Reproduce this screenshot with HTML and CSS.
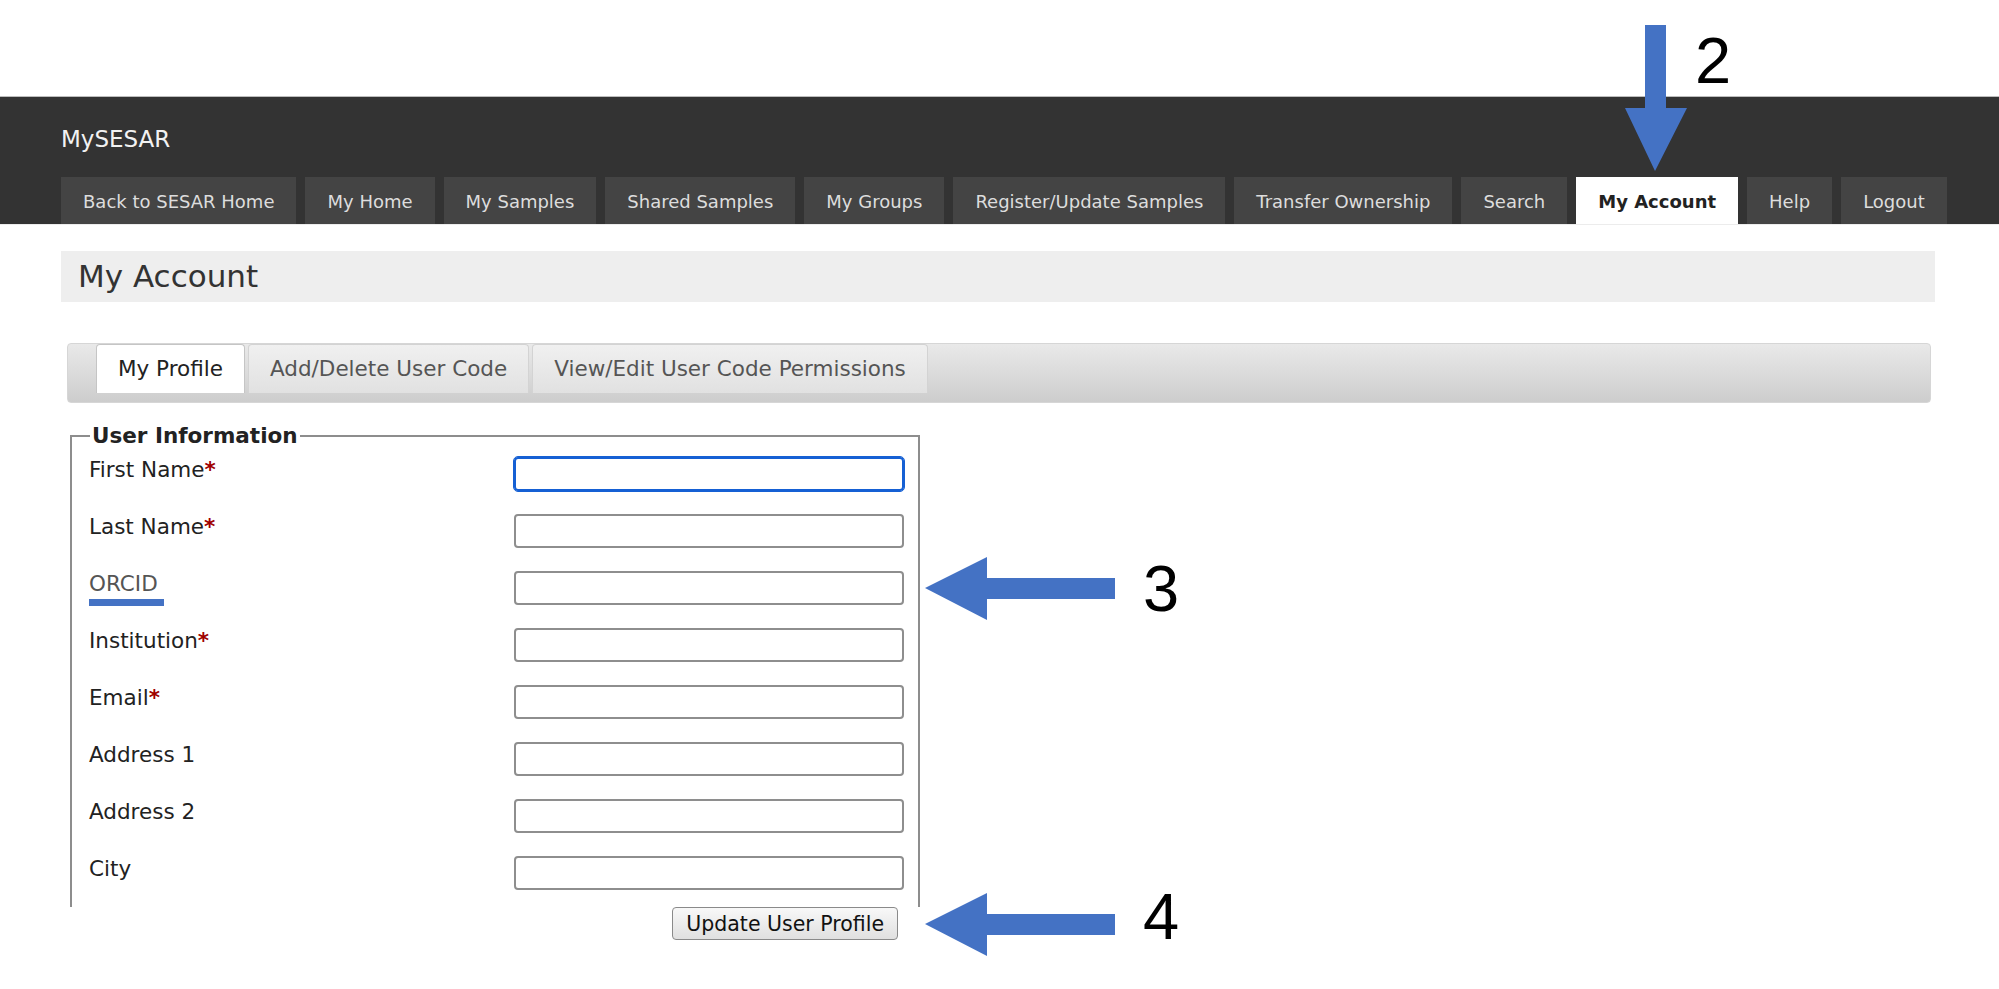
FILE: index.html
```html
<!DOCTYPE html>
<html>
<head>
  <title>MySESAR - My Account</title>
  <link rel="stylesheet" href="styles.css">
</head>
<body>

  <div class="top-space"></div>

  <div class="header">
    <div class="brand">MySESAR</div>
    <ul class="nav">
      <li><a href="#">Back to SESAR Home</a></li>
      <li><a href="#">My Home</a></li>
      <li><a href="#">My Samples</a></li>
      <li><a href="#">Shared Samples</a></li>
      <li><a href="#">My Groups</a></li>
      <li><a href="#">Register/Update Samples</a></li>
      <li><a href="#">Transfer Ownership</a></li>
      <li><a href="#">Search</a></li>
      <li class="active"><a href="#">My Account</a></li>
      <li><a href="#">Help</a></li>
      <li><a href="#">Logout</a></li>
    </ul>
  </div>

  <div class="content">
    <h1 class="page-title">My Account</h1>

    <div class="tabs">
      <ul class="tab-nav">
        <li class="active">My Profile</li>
        <li>Add/Delete User Code</li>
        <li>View/Edit User Code Permissions</li>
      </ul>
    </div>

    <form onsubmit="return false">
      <div class="profile-clip">
        <fieldset class="profile">
          <legend>User Information</legend>
          <div class="fields">
            <label for="firstName">First Name<span class="req">*</span></label>
            <input type="text" id="firstName" class="focused">

            <label for="lastName">Last Name<span class="req">*</span></label>
            <input type="text" id="lastName">

            <label for="orcid" class="orcid">ORCID<span class="orcid-mark"></span></label>
            <input type="text" id="orcid">

            <label for="institution">Institution<span class="req">*</span></label>
            <input type="text" id="institution">

            <label for="email">Email<span class="req">*</span></label>
            <input type="text" id="email">

            <label for="address1">Address 1</label>
            <input type="text" id="address1">

            <label for="address2">Address 2</label>
            <input type="text" id="address2">

            <label for="city">City</label>
            <input type="text" id="city">
          </div>
        </fieldset>
      </div>
      <div class="actions">
        <input type="submit" value="Update User Profile">
      </div>
    </form>
  </div>

  <!-- step annotations -->
  <svg class="annot arrow-2" width="70" height="155" viewBox="1620 20 70 155">
    <polygon points="1645,25 1666,25 1666,108 1687,108 1655,171 1625,108 1645,108"/>
  </svg>
  <div class="step step-2">2</div>

  <svg class="annot arrow-3" width="200" height="75" viewBox="920 550 200 75">
    <polygon points="925,588 987,557 987,578 1115,578 1115,599 987,599 987,620"/>
  </svg>
  <div class="step step-3">3</div>

  <svg class="annot arrow-4" width="200" height="75" viewBox="920 886 200 75">
    <polygon points="925,924 987,893 987,914 1115,914 1115,935 987,935 987,956"/>
  </svg>
  <div class="step step-4">4</div>

</body>
</html>
```

FILE: styles.css
```css
body {
  margin: 0;
  font-family: "DejaVu Sans", Verdana, sans-serif;
  color: #222;
}

.top-space {
  height: 96px;
}

/* dark site header */
.header {
  background: #333;
  border-top: 1px solid #bdbdbd;
  border-bottom: 1px solid #ececec;
  padding-left: 61px;
}

.brand {
  height: 80px;
  box-sizing: border-box;
  padding-top: 29px;
  line-height: 27px;
  font-size: 23px;
  color: #f2f2f2;
}

.nav {
  list-style: none;
  margin: 0;
  padding: 0;
  display: flex;
  gap: 9px;
}

.nav a {
  display: block;
  height: 47px;
  box-sizing: border-box;
  padding: 2px 22px 0;
  line-height: 45px;
  font-size: 18px;
  color: #ddd;
  background: #444;
  text-decoration: none;
}

.nav .active a {
  background: #fff;
  color: #222;
  font-weight: bold;
}

/* page body */
.content {
  padding: 0 64px 0 61px;
}

.page-title {
  margin: 26px 0 0;
  height: 51px;
  line-height: 51px;
  padding-left: 17px;
  background: #eee;
  font-size: 31px;
  font-weight: normal;
  color: #333;
}

.tabs {
  margin: 41px 4px 0 6px;
  height: 60px;
  box-sizing: border-box;
  padding-left: 28px;
  border: 1px solid #d6d6d6;
  border-radius: 4px;
  background: linear-gradient(#e9e9e9, #cdcdcd);
}

.tab-nav {
  list-style: none;
  margin: 0;
  padding: 0;
  display: flex;
  gap: 3px;
}

.tab-nav li {
  height: 49px;
  box-sizing: border-box;
  padding: 0 21px;
  line-height: 48px;
  border: 1px solid #d3d3d3;
  border-bottom: 0;
  border-radius: 4px 4px 0 0;
  background: linear-gradient(#f0f0f0, #e1e1e1);
  color: #555;
  font-size: 21.5px;
}

.tab-nav li.active {
  background: #fff;
  border-color: #c5c5c5;
  color: #222;
}

/* profile form */
.profile-clip {
  margin: 20px 0 0 9px;
  width: 850px;
  height: 484px;
  overflow: hidden;
}

.profile {
  margin: 0;
  width: 850px;
  box-sizing: border-box;
  padding: 9px 14px 30px 17px;
  border: 2px solid #8d8d8d;
}

.profile legend {
  margin-left: 1px;
  padding: 0 2px;
  font-size: 21.5px;
  font-weight: bold;
  color: #222;
}

.fields {
  display: grid;
  grid-template-columns: 425px 390px;
  grid-auto-rows: 34px;
  row-gap: 23px;
}

.fields label {
  padding-top: 1px;
  line-height: 24px;
  font-size: 21.5px;
  color: #222;
}

.req {
  color: #a00000;
  font-weight: bold;
}

.fields .orcid {
  color: #555;
}

.orcid-mark {
  display: block;
  width: 75px;
  height: 7px;
  margin-top: 3px;
  background: #4472c4;
}

.fields input {
  height: 34px;
  box-sizing: border-box;
  border: 2px solid #8e8e8e;
  border-radius: 4px;
  padding: 2px 6px;
  font-family: inherit;
  font-size: 18px;
}

.fields input.focused {
  border-color: #1560d4;
  outline: 1px solid #1560d4;
}

.actions {
  width: 850px;
  margin-left: 9px;
  box-sizing: border-box;
  padding-right: 22px;
  text-align: right;
}

.actions input {
  height: 33px;
  padding: 0 13px;
  border: 1px solid #8a8a8a;
  border-radius: 4px;
  background: linear-gradient(#f8f8f8, #e0e0e0);
  font-family: inherit;
  font-size: 20.5px;
  color: #111;
}

/* annotations laid over the screenshot */
.annot {
  position: absolute;
  fill: #4472c4;
}

.arrow-2 { left: 1620px; top: 20px; }
.arrow-3 { left: 920px; top: 550px; }
.arrow-4 { left: 920px; top: 886px; }

.step {
  position: absolute;
  font-family: "Liberation Sans", Arial, sans-serif;
  font-size: 65px;
  line-height: 65px;
  color: #000;
}

.step-2 { left: 1695px; top: 28px; }
.step-3 { left: 1143px; top: 556px; }
.step-4 { left: 1143px; top: 884px; }
```
